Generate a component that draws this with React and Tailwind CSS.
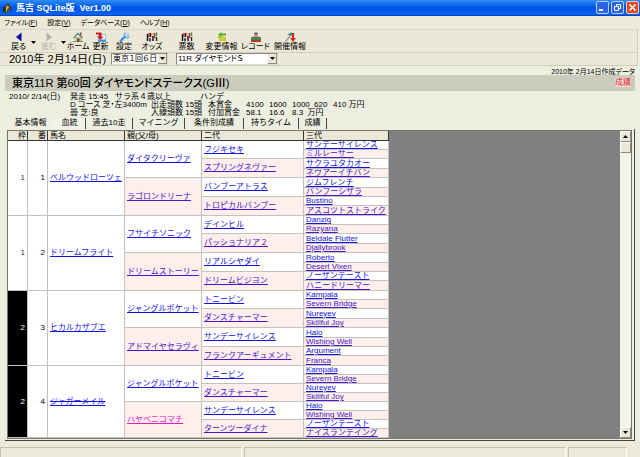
import React, { useState } from 'react';

const MENUS = [
  { label: 'ファイル', key: 'F' },
  { label: '設定', key: 'V' },
  { label: 'データベース', key: 'D' },
  { label: 'ヘルプ', key: 'H' },
];

const TOOLS = [
  { label: '戻る', icon: 'back', width: 'w-[23px]', drop: true },
  { label: '進む', icon: 'forward', width: 'w-[23px]', drop: true, disabled: true },
  { label: 'ホーム', icon: 'home', width: 'w-[22px]' },
  { label: '更新', icon: 'update', width: 'w-[23px]' },
  { label: '設定', icon: 'wrench', width: 'w-[24px]' },
  { label: 'オッズ', icon: 'odds', width: 'w-[32px]' },
  { label: '票数', icon: 'odds', width: 'w-[37px]' },
  { label: '変更情報', icon: 'change', width: 'w-[33px]' },
  { label: 'レコード', icon: 'record', width: 'w-[35px]' },
  { label: '開催情報', icon: 'event', width: 'w-[34px]' },
];

const TABS = [
  { label: '基本情報', width: 'w-[46px]' },
  { label: '血統', width: 'w-[32px]' },
  { label: '過去10走', width: 'w-[47px]' },
  { label: 'マイニング', width: 'w-[52px]' },
  { label: '条件別成績', width: 'w-[59px]' },
  { label: '持ちタイム', width: 'w-[55px]' },
  { label: '成績', width: 'w-[28px]' },
];

const HORSES = [
  {
    waku: 1, no: 1, name: 'ベルウッドローツェ',
    parents: ['ダイタクリーヴァ', 'ラゴロンドリーナ'],
    second: ['フジキセキ', 'スプリングネヴァー', 'バンブーアトラス', 'トロピカルバンブー'],
    third: ['サンデーサイレンス', 'ミルレーサー', 'サクラユタカオー', 'ネヴアーイチバン', 'ジムフレンチ', 'バンブーシザラ', 'Bustino', 'アスコツトストライク'],
  },
  {
    waku: 1, no: 2, name: 'ドリームフライト',
    parents: ['フサイチソニック', 'ドリームストーリー'],
    second: ['デインヒル', 'パッショナリア２', 'リアルシヤダイ', 'ドリームビジヨン'],
    third: ['Danzig', 'Razyana', 'Beldale Flutter', 'Djallybrook', 'Roberto', 'Desert Vixen', 'ノーザンテースト', 'ハニードリーマー'],
  },
  {
    waku: 2, no: 3, name: 'ヒカルカザブエ',
    parents: ['ジャングルポケット', 'アドマイヤセラヴィ'],
    second: ['トニービン', 'ダンスチャーマー', 'サンデーサイレンス', 'フランクアーギュメント'],
    third: ['Kampala', 'Severn Bridge', 'Nureyev', 'Skillful Joy', 'Halo', 'Wishing Well', 'Argument', 'Franca'],
  },
  {
    waku: 2, no: 4, name: 'ジャガーメイル', struck: true,
    parents: ['ジャングルポケット', 'ハヤベニコマチ'],
    marked: 'ハヤベニコマチ',
    second: ['トニービン', 'ダンスチャーマー', 'サンデーサイレンス', 'ターンツーダイナ'],
    third: ['Kampala', 'Severn Bridge', 'Nureyev', 'Skillful Joy', 'Halo', 'Wishing Well', 'ノーザンテースト', 'ナイスランデイング'],
  },
];

const ROW_HEIGHTS = ['h-[9px]', 'h-[9px]', 'h-[10px]', 'h-[9px]', 'h-[10px]', 'h-[9px]', 'h-[9px]', 'h-[10px]'];

function ToolIcon({ name }) {
  return (
    <svg viewBox="0 0 12 10" className="w-3 h-[10px]" aria-hidden="true">
      {name === 'back' && <path d="M8.5 0.5v9L3 5z" fill="#0a0aa8" />}
      {name === 'forward' && <path d="M3.5 0.5v9L9 5z" fill="#b4b2a6" />}
      {name === 'home' && (
        <g>
          <path d="M3 5h7v5H3z" fill="#d8c070" />
          <path d="M1.5 6l4.500-4.500L10.500 6" fill="none" stroke="#4a8f8a" strokeWidth="1.500" />
          <path d="M8 0.500h1.500v3H8z" fill="#b04030" />
          <path d="M5 6.500h2.500V10H5z" fill="#4a4a70" />
          <path d="M1 9.500h3M8.500 9.500H11" stroke="#4a9a50" />
        </g>
      )}
      {name === 'update' && (
        <g>
          <path d="M3.500 2.500h7v7h-7z" fill="#fff" stroke="#8cc4e8" />
          <path d="M3 8.500h8" stroke="#3b8cd0" strokeWidth="2" />
          <path d="M1 0.500h5.500v4h2L5.500 8 2 4.500h2V2.500H1z" fill="#d8141e" />
        </g>
      )}
      {name === 'wrench' && (
        <g>
          <path d="M2 9.500L7.500 4" stroke="#2a86dc" strokeWidth="2" />
          <path d="M7.500 0.500L6 3l3 3 2.500-1.500M11 2L9 3.500" fill="none" stroke="#6fb8f0" strokeWidth="1.500" />
        </g>
      )}
      {name === 'odds' && (
        <g strokeWidth="1.500">
          <path d="M1.500 2v7M4.500 1v4M7 4v5" stroke="#181818" />
          <path d="M3 1v4M8.500 1v5" stroke="#c82060" />
          <path d="M4 6v3.500M10.500 5v4" stroke="#2a2a2a" />
          <path d="M10.500 0.500V4" stroke="#2a9a40" />
          <path d="M6 1v2.500" stroke="#e0b020" />
        </g>
      )}
      {name === 'change' && (
        <g fill="none" strokeWidth="2">
          <path d="M10 2.500H4" stroke="#4cae20" />
          <path d="M5.500 0L2 2.500 5.500 5z" fill="#4cae20" />
          <path d="M3 4v1.500h5" stroke="#a8c41c" />
          <path d="M9 5v3H3" stroke="#d4cc18" />
        </g>
      )}
      {name === 'record' && (
        <g>
          <path d="M1 5h10v5H1z" fill="#a83c34" />
          <path d="M3 5l3-4 3 4z" fill="#b890a8" />
          <path d="M4.500 0.500h3v2h-3z" fill="#684860" />
          <path d="M1 6.500h10" stroke="#38a048" strokeWidth="2" />
        </g>
      )}
      {name === 'event' && (
        <g>
          <path d="M3 3l4-2.500L11 2 9 4z" fill="#3a8a70" />
          <path d="M1.500 9.500L7 3" stroke="#98a0a0" strokeWidth="1.500" />
          <path d="M8 1h2v5h2L9 10 6 6h2z" fill="#d82820" />
        </g>
      )}
    </svg>
  );
}

function Caret() {
  return (
    <svg viewBox="0 0 5 3" className="w-[5px] h-[3px] shrink-0" aria-hidden="true">
      <path d="M0 0h5L2.500 3z" fill="#000" />
    </svg>
  );
}

function ComboBox({ label, value, width }) {
  return (
    <label className={`flex items-stretch h-3 bg-white border border-t-[#8c8a80] border-l-[#8c8a80] border-[#dedbcc] ${width}`}>
      <select aria-label={label} defaultValue={value} className="appearance-none flex-1 min-w-0 bg-transparent pl-px text-[8px] leading-[10px] outline-none [font-feature-settings:'palt']">
        <option>{value}</option>
      </select>
      <span className="w-[9px] flex items-center justify-center bg-[#ebe8d7] border-r border-b border-[#8c8a80] pointer-events-none">
        <Caret />
      </span>
    </label>
  );
}

function Cell({ span = 1, text, mare, marked }) {
  let color = mare ? 'text-[#4418c8]' : 'text-[#1212e0]';
  if (marked) color = 'text-[#e41cc8]';
  return (
    <td rowSpan={span} className={`p-0 pl-0.5 align-middle border-r border-b border-[#c4c2bc] overflow-hidden ${mare ? 'bg-[#feeeec]' : 'bg-white'}`}>
      <a href="#horse" className={`block underline whitespace-nowrap ${color}`}>{text}</a>
    </td>
  );
}

function HorseRows({ horse, compact }) {
  return horse.third.map((name, i) => (
    <tr key={i} className={compact ? 'h-[9px]' : ROW_HEIGHTS[i]}>
      {i === 0 && (
        <>
          <td rowSpan={8} className={`p-0 pr-0.5 text-right align-middle border-r border-b border-[#c4c2bc] ${horse.waku === 2 ? 'bg-black text-white' : 'bg-white text-[#333]'}`}>{horse.waku}</td>
          <td rowSpan={8} className="p-0 pr-0.5 text-right align-middle border-r border-b border-[#c4c2bc] bg-white">{horse.no}</td>
          <td rowSpan={8} className="p-0 pl-0.5 align-middle border-r border-b border-[#c4c2bc] bg-white">
            <a href="#horse" className={`whitespace-nowrap text-[#1212e0] ${horse.struck ? '[text-decoration-line:underline_line-through]' : 'underline'}`}>{horse.name}</a>
          </td>
        </>
      )}
      {i % 4 === 0 && <Cell span={4} text={horse.parents[i / 4]} mare={i === 4} marked={horse.marked === horse.parents[i / 4]} />}
      {i % 2 === 0 && <Cell span={2} text={horse.second[i / 2]} mare={i % 4 === 2} />}
      <Cell text={name} mare={i % 2 === 1} />
    </tr>
  ));
}

function TitleBar() {
  return (
    <header className="h-4 shrink-0 flex items-center gap-1 pl-[3px] pr-px bg-gradient-to-b from-[#2f8cf8] via-[#0054e4] to-[#0562fc] border-b border-[#0842b8]">
      <svg viewBox="0 0 9 10" className="w-[9px] h-[10px]" aria-hidden="true">
        <path d="M1 10V6L3 2 5 0l2 3 2 4-2 1-2-2v4z" fill="#4a3c14" />
        <path d="M3 9V4l2-2 1 3-2 2v2z" fill="#c8a838" />
        <path d="M0 4h2v5H0z" fill="#182818" />
      </svg>
      <h1 className="flex-1 text-[9px] leading-[14px] font-bold text-white whitespace-pre">馬吉 SQLite版  Ver1.00</h1>
      <div className="flex gap-0.5">
        <button aria-label="最小化" className="w-[13px] h-[13px] rounded-[2px] border border-[#b8d0fc] bg-[#2c64e8] flex items-center justify-center">
          <svg viewBox="0 0 9 9" className="w-[9px] h-[9px]"><path d="M1 6h4v2H1z" fill="#fff" /></svg>
        </button>
        <button aria-label="元に戻す" className="w-[13px] h-[13px] rounded-[2px] border border-[#b8d0fc] bg-[#2c64e8] flex items-center justify-center">
          <svg viewBox="0 0 9 9" className="w-[9px] h-[9px]" fill="none" stroke="#fff"><path d="M3.500 3V1.500h4v4H6M1.500 3.500h4v4h-4z" /></svg>
        </button>
        <button aria-label="閉じる" className="w-[13px] h-[13px] rounded-[2px] border border-[#f4c8b8] bg-[#dc4c24] flex items-center justify-center">
          <svg viewBox="0 0 9 9" className="w-[9px] h-[9px]"><path d="M1.500 1.500l6 6M7.500 1.500l-6 6" stroke="#fff" strokeWidth="1.500" /></svg>
        </button>
      </div>
    </header>
  );
}

function ScrollBar() {
  return (
    <div className="w-[11px] shrink-0 flex flex-col bg-[#f4f3ea]">
      <button aria-label="上へ" className="h-[11px] flex items-center justify-center bg-[#ebe8d7] border border-white border-r-[#8c8a80] border-b-[#8c8a80]">
        <span className="rotate-180 flex"><Caret /></span>
      </button>
      <div className="h-[11px] bg-[#ebe8d7] border border-white border-r-[#8c8a80] border-b-[#8c8a80]"></div>
      <div className="flex-1"></div>
      <button aria-label="下へ" className="h-[11px] flex items-center justify-center bg-[#ebe8d7] border border-white border-r-[#8c8a80] border-b-[#8c8a80]">
        <Caret />
      </button>
    </div>
  );
}

export default function App() {
  const [tab, setTab] = useState('血統');

  return (
    <div className="h-screen flex flex-col bg-[#eceee0] text-black text-[8px] leading-[8px] font-['Liberation_Sans','Noto_Sans_CJK_JP',sans-serif] overflow-hidden">
      <TitleBar />

      <nav className="h-[14px] shrink-0 flex items-center gap-2.5 px-1 text-[7px] bg-[#ece9d8] border-b border-[#d8d4d0] [font-feature-settings:'palt']">
        {MENUS.map((m) => (
          <button key={m.key} className="whitespace-nowrap">{m.label}(<u>{m.key}</u>)</button>
        ))}
      </nav>

      <div className="h-[23px] shrink-0 flex items-end pl-[7px] mr-0.5 bg-[#ebe8d7] border-b border-r border-[#cfccbc] [font-feature-settings:'palt']">
        {TOOLS.map((t, i) => (
          <div key={i} className="flex items-center">
            <button disabled={t.disabled} className={`flex flex-col items-center whitespace-nowrap ${t.width} ${t.disabled ? 'text-[#b4b2a6]' : ''}`}>
              <ToolIcon name={t.icon} />
              <span className="leading-[10px]">{t.label}</span>
            </button>
            {t.drop && <button aria-label={`${t.label}の履歴`} className="w-[7px] flex justify-center"><Caret /></button>}
          </div>
        ))}
      </div>

      <div className="h-[13px] shrink-0 flex items-center pl-[9px] mr-0.5 bg-[#ebe8d7] border-b border-r border-[#cfccbc]">
        <div className="w-[102px] text-[11px] leading-3 whitespace-nowrap [font-feature-settings:'palt']">2010年 2月14日(日)</div>
        <div className="flex gap-2">
          <ComboBox label="開催" value="東京１回６日" width="w-[57px]" />
          <ComboBox label="レース" value="11R ダイヤモンドＳ" width="w-[102px]" />
        </div>
      </div>

      <main className="flex-1 min-h-0 flex flex-col px-[5px]">
        <p className="h-[9px] shrink-0 text-right text-[7px] leading-[11px] [font-feature-settings:'palt']">2010年 2月14日作成データ</p>

        <div className="h-4 shrink-0 flex items-center justify-between pl-[7px] pr-1 bg-[#cbcbbe]">
          <h2 className="text-[11px] leading-4 font-medium whitespace-nowrap [font-feature-settings:'palt']">東京11R 第60回 ダイヤモンドステークス(GⅢ)</h2>
          <a href="#result" className="text-[#e8182c] bg-[#f0e4dc] leading-[8px]">成績</a>
        </div>

        <div className="shrink-0 flex pt-0.5 pl-1 h-[26px] whitespace-pre">
          <p className="w-[61px]">2010/ 2/14(日)</p>
          <div className="w-[81px]">
            <p>発走 15:45   サラ系４歳以上</p>
            <p className="[font-feature-settings:'palt']">D コース 芝・左3400m</p>
            <p>曇 芝:良</p>
          </div>
          <div className="w-[57px] pt-2">
            <p>出走頭数 15頭</p>
            <p>入線頭数 15頭</p>
          </div>
          <div>
            <p className="-ml-2">ハンデ</p>
            <div className="grid grid-cols-[38px_23px_23px_22px_19px_auto]">
              <span>本賞金</span><span>4100</span><span>1600</span><span>1000</span><span>620</span><span>410 万円</span>
              <span>付加賞金</span><span>58.1</span><span>16.6</span><span className="col-span-3">8.3  万円</span>
            </div>
          </div>
        </div>

        <div role="tablist" className="h-3 shrink-0 flex items-center pl-[3px]">
          {TABS.map((t) => (
            <button
              key={t.label}
              role="tab"
              aria-selected={tab === t.label}
              onClick={() => setTab(t.label)}
              className={`h-[11px] flex items-center justify-center whitespace-nowrap border-r ${t.width} ${t.label === '基本情報' ? 'border-transparent bg-[#f0efe4]' : 'border-[#444]'} ${tab === t.label ? 'bg-[#f2f3e8]' : ''}`}
            >
              {t.label}
            </button>
          ))}
        </div>

        <section className="flex-1 min-h-0 flex border-r border-b border-[#444] pt-px pl-0.5 pr-0.5 pb-px">
          <div className="flex-1 min-w-0 flex bg-[#808080] border border-[#77756c] overflow-hidden">
            <div className="flex-1 min-w-0 overflow-hidden">
              <table className="table-fixed border-separate border-spacing-0 w-[381px]">
                <colgroup>
                  <col className="w-[20px]" />
                  <col className="w-[20px]" />
                  <col className="w-[77px]" />
                  <col className="w-[77px]" />
                  <col className="w-[102px]" />
                  <col className="w-[85px]" />
                </colgroup>
                <thead>
                  <tr className="h-[10px]">
                    {['枠', '番', '馬名', '親(父/母)', '二代', '三代'].map((h, i) => (
                      <th key={h} className={`p-0 font-normal bg-[#ebe8d7] border-r border-b border-[#333] ${i < 2 ? 'text-right pr-px' : 'text-left pl-0.5'}`}>{h}</th>
                    ))}
                  </tr>
                </thead>
                <tbody>
                  {HORSES.map((h, i) => <HorseRows key={h.no} horse={h} compact={i === HORSES.length - 1} />)}
                </tbody>
              </table>
            </div>
            <ScrollBar />
          </div>
        </section>
      </main>

      <footer className="shrink-0 h-4 pt-[6px] pr-[13px] flex gap-0.5 bg-[#eceadb]">
        <div className="w-[242px] border-t border-l border-r border-[#c4c1b0] border-r-white"></div>
        <div className="flex-1 border-t border-l border-r border-[#c4c1b0] border-r-white"></div>
        <div className="w-[59px] border-t border-l border-r border-[#c4c1b0] border-r-white"></div>
      </footer>
    </div>
  );
}
